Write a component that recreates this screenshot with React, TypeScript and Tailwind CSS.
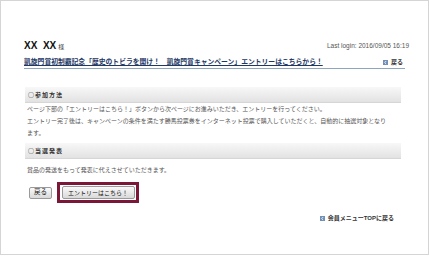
import React from "react";

const Icon = () => (
  <svg width="5" height="5" viewBox="0 0 5 5" className="shrink-0">
    <rect x="0" y="0" width="5" height="5" fill="#6f8fb6" />
    <polyline points="3.1,1.1 1.7,2.5 3.1,3.9" fill="none" stroke="#fff" strokeWidth="0.9" />
  </svg>
);

export default function App() {
  return (
    <div className="w-[429px] h-[255px] border border-[#d5d5d5] bg-white font-['Liberation_Sans','Noto_Sans_CJK_JP',sans-serif] text-[#333]">
      <div className="ml-[23px] w-[381px] pt-[39px]">
        <div className="flex items-center justify-between w-[385px] h-[12px]">
          <div className="flex items-end">
            <span className="text-[10px] font-bold leading-[12px] text-[#111] whitespace-pre">XX  XX</span>
            <span className="text-[6px] leading-[10px] ml-[2px] text-[#333] font-['Noto_Sans_CJK_JP',sans-serif]">様</span>
          </div>
          <span className="text-[6.5px] leading-[10px] text-[#555]">Last login: 2016/09/05 16:19</span>
        </div>
        <div className="mt-[4px] flex items-center justify-between h-[13px] border-b border-[#8ea6bd] pr-[2px]">
          <span className="text-[6.8px] font-bold leading-[10px] text-[#1e3763] underline whitespace-nowrap">凱旋門賞初制覇記念「歴史のトビラを開け！　凱旋門賞キャンペーン」エントリーはこちらから！</span>
          <span className="flex items-center gap-[3px] text-[6px] font-bold leading-[8px] text-[#333]">
            <Icon />
            戻る
          </span>
        </div>

        <div className="mt-[18px] ml-[1px] w-[376px] h-[16px] flex items-center pl-[3px] bg-linear-to-b from-[#f8f8f8] to-[#e2e2e2] border-b border-[#d6d6d6]">
          <span className="text-[6px] font-bold tracking-[1px] text-[#333] font-['Noto_Sans_CJK_JP',sans-serif]">○参加方法</span>
        </div>
        <div className="pl-[3px] text-[6px] leading-[12px] text-[#555] whitespace-nowrap">
          ページ下部の「エントリーはこちら！」ボタンから次ページにお進みいただき、エントリーを行ってください。<br />
          エントリー完了後は、キャンペーンの条件を満たす勝馬投票券をインターネット投票で購入していただくと、自動的に抽選対象となり<br />
          ます。
        </div>

        <div className="mt-[4px] ml-[1px] w-[376px] h-[16px] flex items-center pl-[3px] bg-linear-to-b from-[#f8f8f8] to-[#e2e2e2] border-b border-[#d6d6d6]">
          <span className="text-[6px] font-bold tracking-[1px] text-[#333] font-['Noto_Sans_CJK_JP',sans-serif]">○当選発表</span>
        </div>
        <div className="mt-[5px] pl-[3px] text-[6px] leading-[12px] text-[#555] whitespace-nowrap">
          賞品の発送をもって発表に代えさせていただきます。
        </div>

        <div className="mt-[6px] flex items-center">
          <button className="ml-[5px] w-[23px] h-[12px] flex items-center justify-center text-[6.5px] leading-none text-[#111] border border-[#9a9a9a] rounded-[2px] bg-linear-to-b from-[#fafafa] to-[#d9d9d9]">
            戻る
          </button>
          <div className="ml-[5px] w-[82px] h-[21px] border-[3px] border-[#7b1838] flex items-center justify-center">
            <button className="w-[73px] h-[13px] flex items-center justify-center text-[6px] leading-none text-[#111] border border-[#9a9a9a] rounded-[2px] bg-linear-to-b from-[#fafafa] to-[#d9d9d9] whitespace-nowrap">
              エントリーはこちら！
            </button>
          </div>
        </div>

        <div className="mt-[10px] flex justify-end pr-[11px]">
          <span className="flex items-center gap-[3px] text-[6px] font-bold leading-[10px] text-[#333] whitespace-nowrap">
            <Icon />
            会員メニューTOPに戻る
          </span>
        </div>
      </div>
    </div>
  );
}
